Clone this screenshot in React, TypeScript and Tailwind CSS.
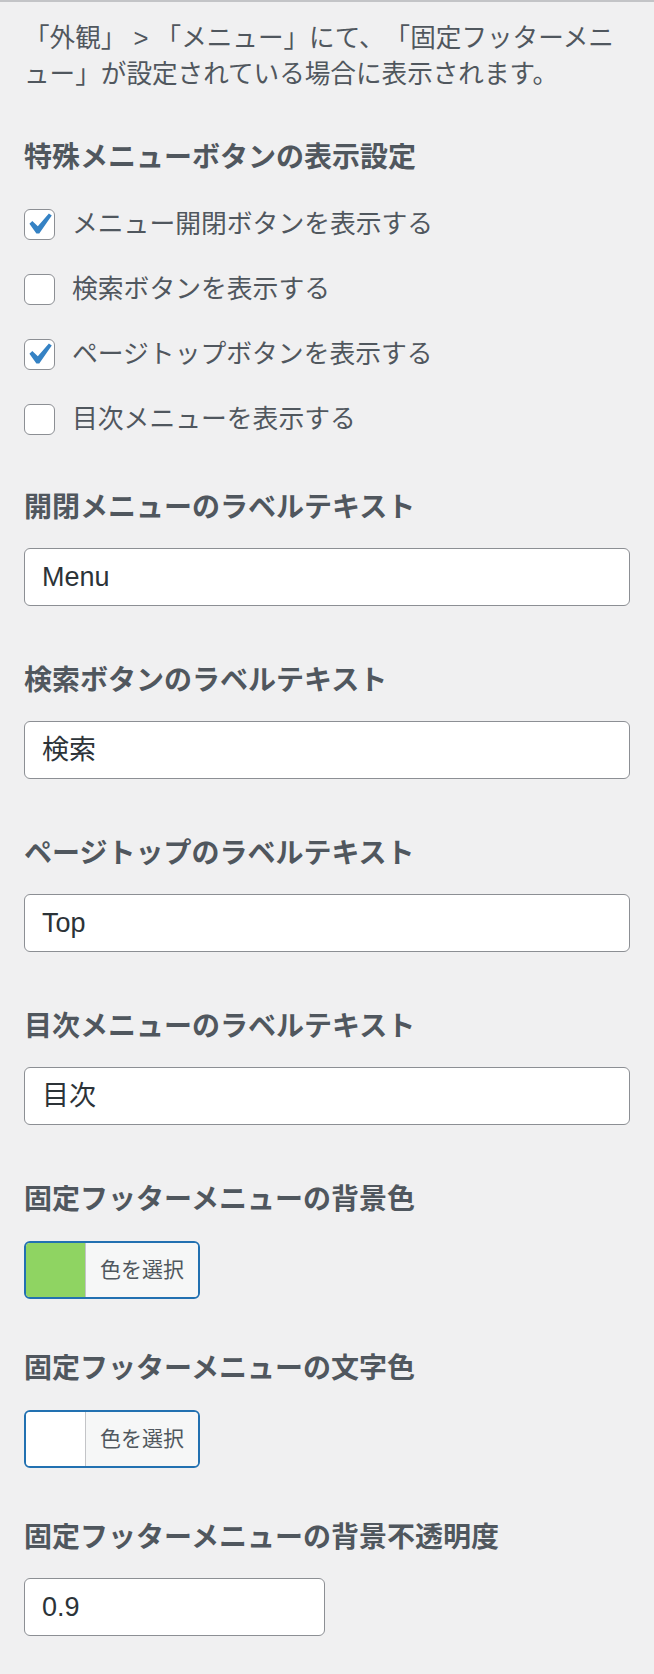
import type { ReactNode } from 'react';

const FONT = "font-['Liberation_Sans','Noto_Sans_CJK_JP',sans-serif]";

const checks = [
  { label: 'メニュー開閉ボタンを表示する', checked: true },
  { label: '検索ボタンを表示する', checked: false },
  { label: 'ページトップボタンを表示する', checked: true },
  { label: '目次メニューを表示する', checked: false },
];

function Heading({ children, className = '' }: { children: ReactNode; className?: string }) {
  return (
    <h3 className={`h-[40px] text-[28px] font-bold leading-[40px] text-[#50575e] ${className}`}>
      {children}
    </h3>
  );
}

function TextField({ value, className = 'w-full' }: { value: string; className?: string }) {
  return (
    <div
      className={`mt-[20px] flex h-[58px] items-center rounded-[6px] border-[1.5px] border-[#8c8f94] bg-white pl-[17px] text-[27px] text-[#2c3338] ${className}`}
    >
      {value}
    </div>
  );
}

function ColorButton({ color }: { color: string }) {
  return (
    <div className="mt-[21px] flex h-[58px] w-[176px] overflow-hidden rounded-[6px] border-2 border-[#2271b1]">
      <div className={`w-[60px] border-r-[1.5px] border-[#c3c4c7] ${color}`} />
      <div className="flex flex-1 items-center justify-center bg-[#f6f7f7] text-[21px] text-[#50575e]">
        色を選択
      </div>
    </div>
  );
}

function Checkbox({ checked }: { checked: boolean }) {
  return (
    <span className="relative h-[31px] w-[31px] shrink-0 rounded-[6px] border-[1.5px] border-[#8c8f94] bg-white">
      {checked && (
        <svg
          viewBox="0 0 20 20"
          className="absolute left-[-8px] top-[-7px] h-[43px] w-[43px]"
          aria-hidden
        >
          <path d="M14.83 4.89l1.34.94-5.81 8.38H9.02L5.78 9.67l1.34-1.25 2.57 2.4z" fill="#3582c4" />
        </svg>
      )}
    </span>
  );
}

export default function App() {
  return (
    <div
      className={`min-h-screen border-t-2 border-[#c3c4c7] bg-[#f0f0f1] px-[24px] pt-[18px] pb-[37px] [text-spacing-trim:space-all] ${FONT}`}
    >
      <p className="text-[25.6px] leading-[36px] text-[#50575e]">
        「外観」 &gt; 「メニュー」にて、「固定フッターメニュー」が設定されている場合に表示されます。
      </p>

      <Heading className="mt-[46px]">特殊メニューボタンの表示設定</Heading>
      <div className="mt-[14px]">
        {checks.map((c) => (
          <label key={c.label} className="flex h-[65px] items-center gap-[17px] text-[25.8px] text-[#50575e]">
            <Checkbox checked={c.checked} />
            <span>{c.label}</span>
          </label>
        ))}
      </div>

      <Heading className="mt-[36px]">開閉メニューのラベルテキスト</Heading>
      <TextField value="Menu" />

      <Heading className="mt-[55px]">検索ボタンのラベルテキスト</Heading>
      <TextField value="検索" />

      <Heading className="mt-[55px]">ページトップのラベルテキスト</Heading>
      <TextField value="Top" />

      <Heading className="mt-[55px]">目次メニューのラベルテキスト</Heading>
      <TextField value="目次" />

      <Heading className="mt-[55px]">固定フッターメニューの背景色</Heading>
      <ColorButton color="bg-[#8fd462]" />

      <Heading className="mt-[50px]">固定フッターメニューの文字色</Heading>
      <ColorButton color="bg-white" />

      <Heading className="mt-[50px]">固定フッターメニューの背景不透明度</Heading>
      <TextField value="0.9" className="w-[301px]" />
    </div>
  );
}
